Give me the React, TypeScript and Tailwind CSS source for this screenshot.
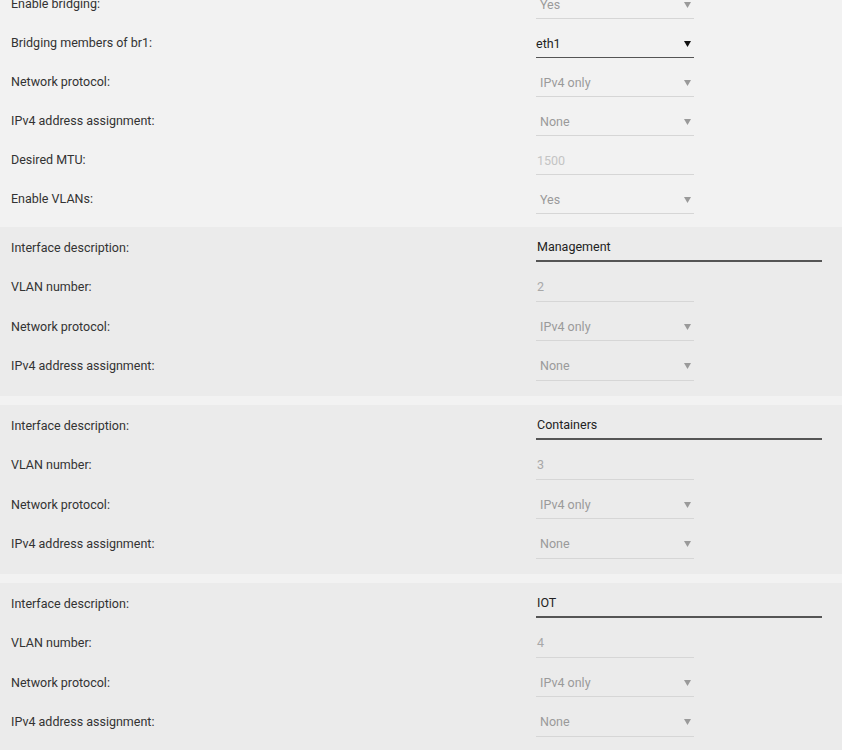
import React from "react";

type Field =
  | { kind: "select"; value: string; active?: boolean }
  | { kind: "text"; value: string; tone: "dark" | "muted" | "faint"; wide?: boolean };

type Row = { label: string; field: Field };

const Arrow = ({ dark }: { dark?: boolean }) => (
  <svg width="7" height="6" viewBox="0 0 7 6" className="shrink-0">
    <path d="M0 0 H7 L3.5 6 Z" fill={dark ? "#111111" : "#9a9a9a"} />
  </svg>
);

function FieldView({ field }: { field: Field }) {
  if (field.kind === "select") {
    return (
      <div
        className={`flex h-[28px] w-[158px] items-center justify-between border-b pr-[3px] ${
          field.active ? "border-[#555555] pl-0 text-[#222222]" : "border-[#d6d6d6] pl-[4px] text-[#9a9a9a]"
        }`}
      >
        <span className="pt-[1px] text-[12.5px] leading-none">{field.value}</span>
        <Arrow dark={field.active} />
      </div>
    );
  }
  const toneCls =
    field.tone === "dark"
      ? "text-[#222222] border-b-2 border-[#555555]"
      : field.tone === "muted"
      ? "text-[#a8a8a8] border-b border-[#d6d6d6]"
      : "text-[#c4c4c4] border-b border-[#d6d6d6]";
  return (
    <div
      className={`flex h-[28px] items-center pl-[1px] ${field.wide ? "w-[286px]" : "w-[158px]"} ${toneCls}`}
    >
      <span className="pt-[1px] text-[12.5px] leading-none">{field.value}</span>
    </div>
  );
}

function RowView({ row, tall }: { row: Row; tall?: boolean }) {
  return (
    <div className={`flex items-start ${tall ? "h-[39.5px]" : "h-[39px]"}`}>
      <div
        className={`flex h-[26px] w-[536px] items-center pl-[11px] text-[12.5px] leading-none text-[#333333] ${
          tall ? "pt-[2px]" : ""
        }`}
      >
        {row.label}
      </div>
      <FieldView field={row.field} />
    </div>
  );
}

const topRows: Row[] = [
  { label: "Enable bridging:", field: { kind: "select", value: "Yes" } },
  { label: "Bridging members of br1:", field: { kind: "select", value: "eth1", active: true } },
  { label: "Network protocol:", field: { kind: "select", value: "IPv4 only" } },
  { label: "IPv4 address assignment:", field: { kind: "select", value: "None" } },
  { label: "Desired MTU:", field: { kind: "text", value: "1500", tone: "faint" } },
  { label: "Enable VLANs:", field: { kind: "select", value: "Yes" } },
];

const vlans = [
  { name: "Management", num: "2" },
  { name: "Containers", num: "3" },
  { name: "IOT", num: "4" },
];

export default function App() {
  return (
    <div
      className="min-h-[750px] overflow-hidden bg-[#f2f2f2]"
      style={{ fontFamily: "Roboto, 'Noto Sans', sans-serif" }}
    >
      <div className="-mt-[9px] mb-[2px]">
        {topRows.map((r) => (
          <RowView key={r.label} row={r} />
        ))}
      </div>
      <div className="flex flex-col gap-[9px]">
        {vlans.map((v) => (
          <div key={v.name} className="bg-[#ebebeb] pb-[4px] pt-[7px]">
            <RowView tall row={{ label: "Interface description:", field: { kind: "text", value: v.name, tone: "dark", wide: true } }} />
            <RowView tall row={{ label: "VLAN number:", field: { kind: "text", value: v.num, tone: "muted" } }} />
            <RowView tall row={{ label: "Network protocol:", field: { kind: "select", value: "IPv4 only" } }} />
            <RowView tall row={{ label: "IPv4 address assignment:", field: { kind: "select", value: "None" } }} />
          </div>
        ))}
      </div>
    </div>
  );
}
